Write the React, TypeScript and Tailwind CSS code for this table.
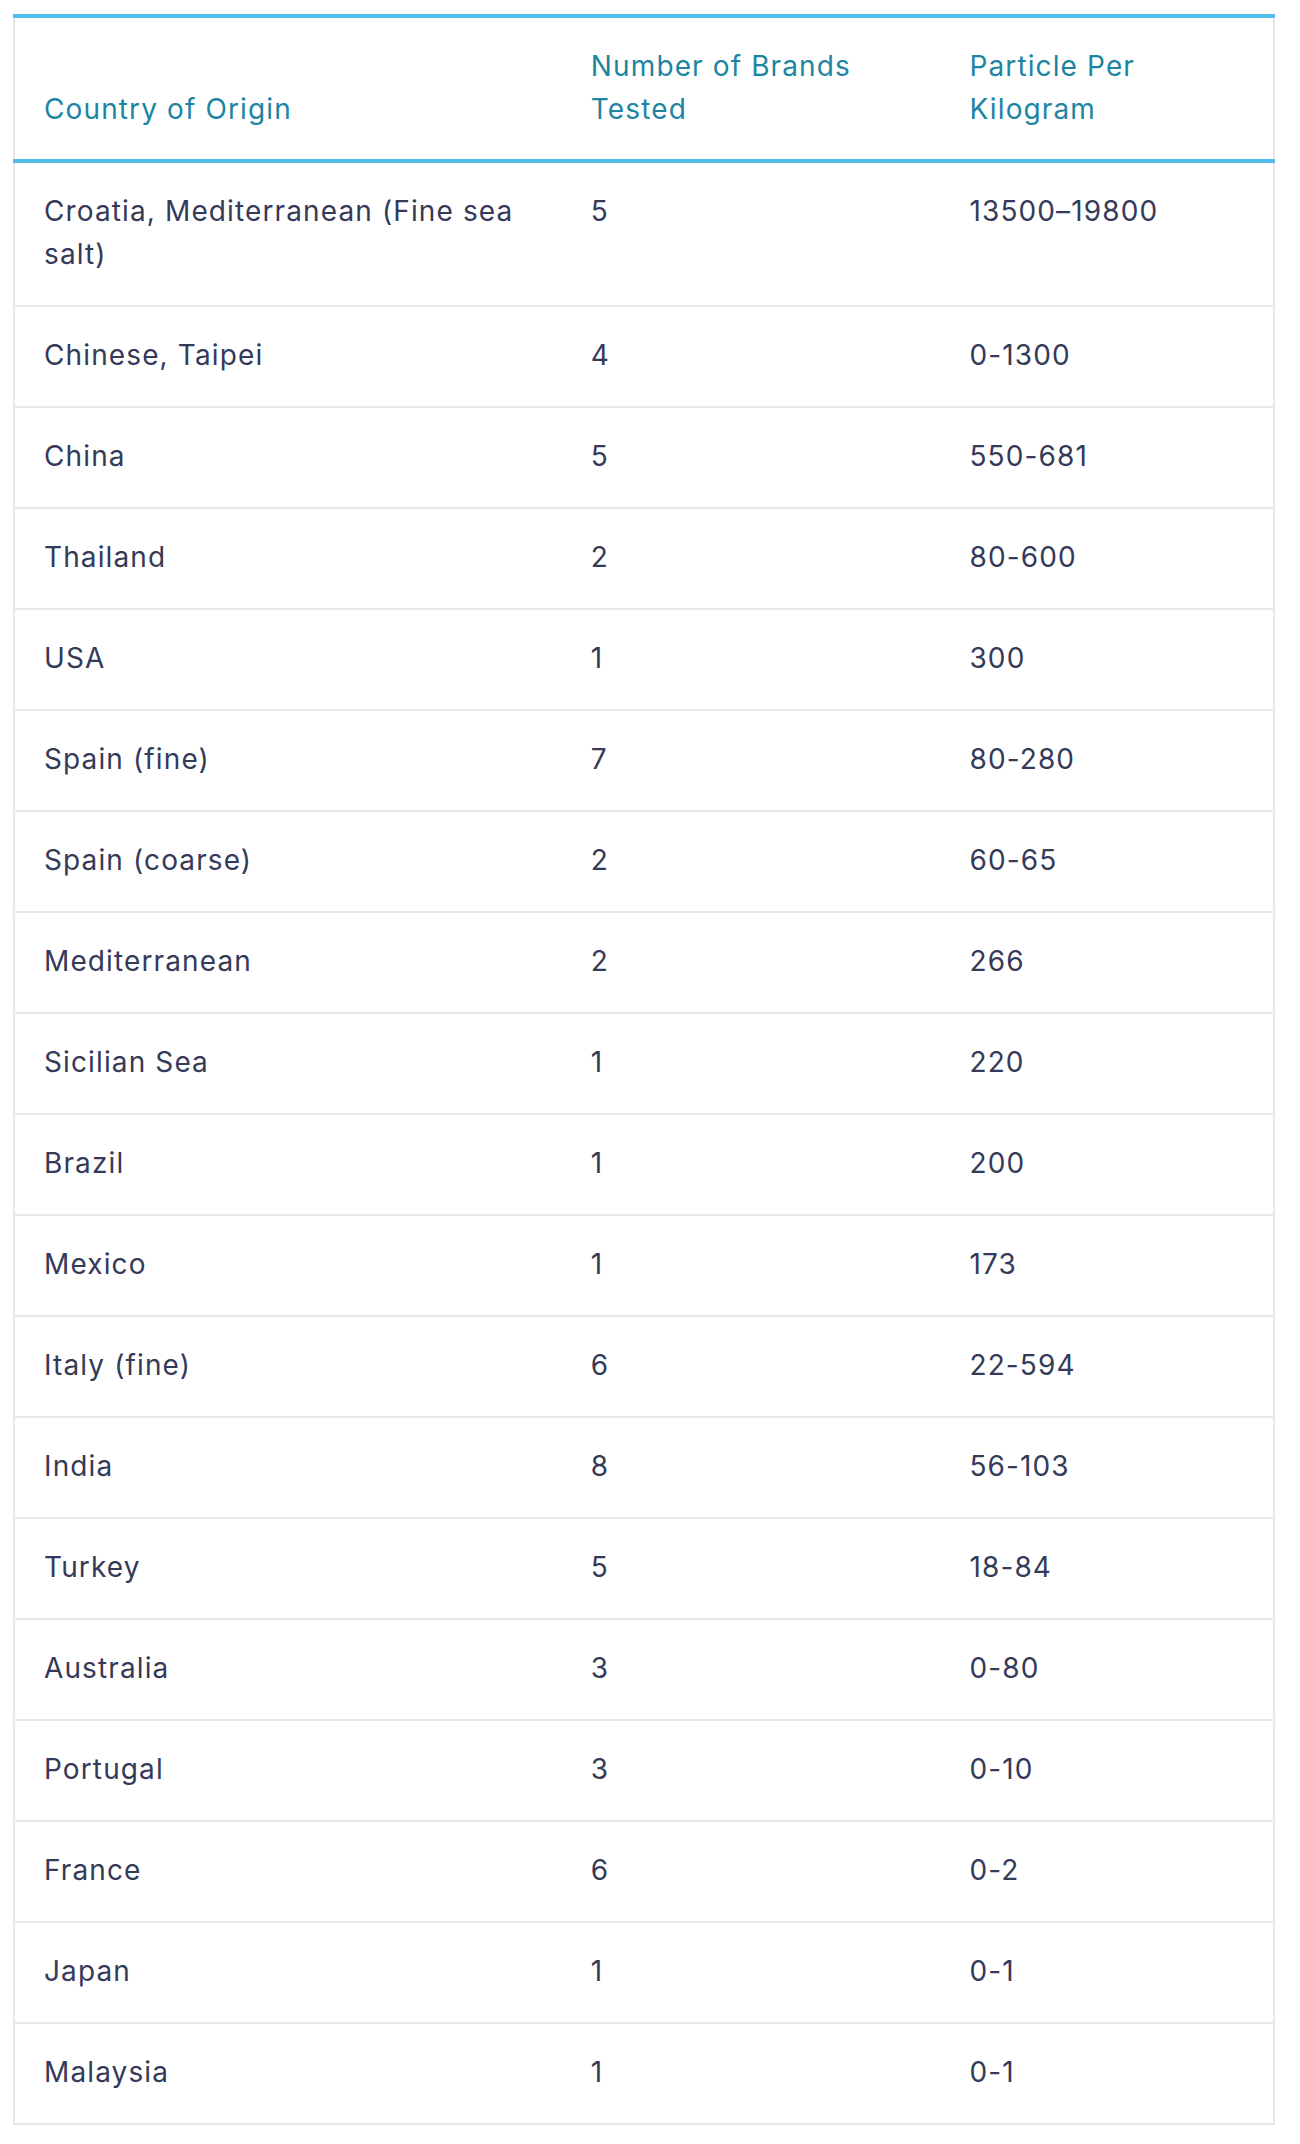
const rows: [string, string, string][] = [
  ['Croatia, Mediterranean (Fine sea salt)', '5', '13500–19800'],
  ['Chinese, Taipei', '4', '0-1300'],
  ['China', '5', '550-681'],
  ['Thailand', '2', '80-600'],
  ['USA', '1', '300'],
  ['Spain (fine)', '7', '80-280'],
  ['Spain (coarse)', '2', '60-65'],
  ['Mediterranean', '2', '266'],
  ['Sicilian Sea', '1', '220'],
  ['Brazil', '1', '200'],
  ['Mexico', '1', '173'],
  ['Italy (fine)', '6', '22-594'],
  ['India', '8', '56-103'],
  ['Turkey', '5', '18-84'],
  ['Australia', '3', '0-80'],
  ['Portugal', '3', '0-10'],
  ['France', '6', '0-2'],
  ['Japan', '1', '0-1'],
  ['Malaysia', '1', '0-1'],
];

export default function App() {
  return (
    <div className="min-h-screen bg-white pt-[14px] pl-[13px] font-['Inter',sans-serif]">
      <table className="w-[1262px] table-fixed border-collapse border-2 border-t-0 border-[#e8e8e8] text-left text-[28px] leading-[43px] tracking-[0.04em]">
        <colgroup>
          <col className="w-[547px]" />
          <col className="w-[378px]" />
          <col className="w-[333px]" />
        </colgroup>
        <thead>
          <tr className="border-y-4 border-[#52bce8] text-[#1d85a2]">
            <th className="pl-[29px] pr-[30px] pt-[27px] pb-[28px] align-bottom font-normal">Country of Origin</th>
            <th className="pl-[29px] pr-[30px] pt-[27px] pb-[28px] align-bottom font-normal">Number of Brands Tested</th>
            <th className="pl-[29px] pr-[30px] pt-[27px] pb-[28px] align-bottom font-normal">Particle Per Kilogram</th>
          </tr>
        </thead>
        <tbody className="text-[#343a58]">
          {rows.map(([country, brands, particles]) => (
            <tr key={country} className="border-t-2 border-[#e8e8e8] first:border-t-0">
              <td className="pl-[29px] pr-[30px] pt-[27px] pb-[29px] align-top">{country}</td>
              <td className="pl-[29px] pr-[30px] pt-[27px] pb-[29px] align-top">{brands}</td>
              <td className="pl-[29px] pr-[30px] pt-[27px] pb-[29px] align-top">{particles}</td>
            </tr>
          ))}
        </tbody>
      </table>
    </div>
  );
}
